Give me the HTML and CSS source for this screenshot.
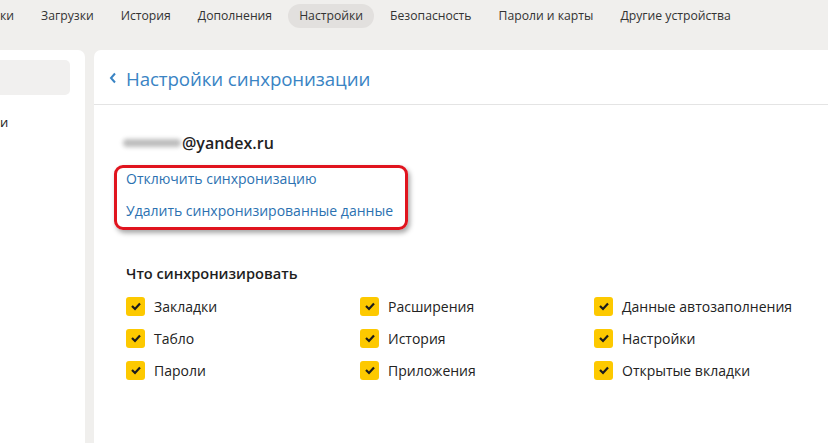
FILE: index.html
```html
<!DOCTYPE html>
<html lang="ru">
<head>
<meta charset="utf-8">
<link rel="stylesheet" href="styles.css">
</head>
<body>
<nav class="topnav">
  <span class="tab tab-cut">ки</span>
  <span class="tab">Загрузки</span>
  <span class="tab">История</span>
  <span class="tab">Дополнения</span>
  <span class="tab active">Настройки</span>
  <span class="tab">Безопасность</span>
  <span class="tab">Пароли и карты</span>
  <span class="tab">Другие устройства</span>
</nav>
<div class="layout">
  <aside class="sidebar">
    <div class="side-selected"></div>
    <div class="side-item">и</div>
  </aside>
  <main class="panel">
    <header class="panel-head">
      <svg class="chev" width="8" height="12" viewBox="0 0 8 12"><path d="M6 1.5 L2 6 L6 10.5" fill="none" stroke="#3a84c4" stroke-width="2"/></svg>
      <h1 class="title">Настройки синхронизации</h1>
    </header>
    <section class="panel-body">
      <div class="account"><span class="blur"></span><span class="domain">@yandex.ru</span></div>
      <div class="links">
        <a class="link">Отключить синхронизацию</a>
        <a class="link">Удалить синхронизированные данные</a>
        <div class="highlight"></div>
      </div>
      <h2 class="subhead">Что синхронизировать</h2>
      <div class="grid">
        <label class="opt"><span class="box"><svg width="12" height="10" viewBox="0 0 12 10"><path d="M2 5 L5 8 L10 2.5" fill="none" stroke="#1c1c1c" stroke-width="2.2"/></svg></span>Закладки</label>
        <label class="opt"><span class="box"><svg width="12" height="10" viewBox="0 0 12 10"><path d="M2 5 L5 8 L10 2.5" fill="none" stroke="#1c1c1c" stroke-width="2.2"/></svg></span>Расширения</label>
        <label class="opt"><span class="box"><svg width="12" height="10" viewBox="0 0 12 10"><path d="M2 5 L5 8 L10 2.5" fill="none" stroke="#1c1c1c" stroke-width="2.2"/></svg></span>Данные автозаполнения</label>
        <label class="opt"><span class="box"><svg width="12" height="10" viewBox="0 0 12 10"><path d="M2 5 L5 8 L10 2.5" fill="none" stroke="#1c1c1c" stroke-width="2.2"/></svg></span>Табло</label>
        <label class="opt"><span class="box"><svg width="12" height="10" viewBox="0 0 12 10"><path d="M2 5 L5 8 L10 2.5" fill="none" stroke="#1c1c1c" stroke-width="2.2"/></svg></span>История</label>
        <label class="opt"><span class="box"><svg width="12" height="10" viewBox="0 0 12 10"><path d="M2 5 L5 8 L10 2.5" fill="none" stroke="#1c1c1c" stroke-width="2.2"/></svg></span>Настройки</label>
        <label class="opt"><span class="box"><svg width="12" height="10" viewBox="0 0 12 10"><path d="M2 5 L5 8 L10 2.5" fill="none" stroke="#1c1c1c" stroke-width="2.2"/></svg></span>Пароли</label>
        <label class="opt"><span class="box"><svg width="12" height="10" viewBox="0 0 12 10"><path d="M2 5 L5 8 L10 2.5" fill="none" stroke="#1c1c1c" stroke-width="2.2"/></svg></span>Приложения</label>
        <label class="opt"><span class="box"><svg width="12" height="10" viewBox="0 0 12 10"><path d="M2 5 L5 8 L10 2.5" fill="none" stroke="#1c1c1c" stroke-width="2.2"/></svg></span>Открытые вкладки</label>
      </div>
    </section>
  </main>
</div>
</body>
</html>
```

FILE: styles.css
```css
* { box-sizing: border-box; }
html, body { margin: 0; padding: 0; height: 100%; }
body {
  background: #f0efed;
  font-family: "Open Sans", "Noto Sans", "Liberation Sans", sans-serif;
  color: #222;
  overflow: hidden;
}
.topnav {
  display: flex;
  align-items: center;
  gap: 5px;
  height: 50px;
  padding: 3px 0 21px 0;
}
.tab {
  font-size: 12.2px;
  color: #333;
  padding: 0 11px;
  height: 24px;
  line-height: 24px;
  border-radius: 12px;
  white-space: nowrap;
}
.tab-cut { padding-left: 0; }
.tab.active { background: #e2e0de; }
.layout {
  display: flex;
  gap: 9px;
  height: calc(100% - 50px);
}
.sidebar {
  width: 85px;
  background: #fff;
  border-top-right-radius: 7px;
  padding-top: 10px;
}
.side-selected {
  width: 70px;
  height: 35px;
  background: #f1f0ef;
  border-radius: 0 5px 5px 0;
}
.side-item {
  font-size: 13px;
  line-height: 18px;
  margin-top: 18px;
  color: #222;
}
.panel {
  flex: 1;
  background: #fff;
  border-top-left-radius: 7px;
}
.panel-head {
  display: flex;
  align-items: center;
  gap: 9px;
  height: 55px;
  padding: 2px 0 0 15px;
  border-bottom: 1px solid #e4e4e4;
}
.chev { display: block; }
.title {
  margin: 0;
  font-size: 18.7px;
  font-weight: 400;
  color: #3a84c4;
  letter-spacing: -0.1px;
}
.panel-body { padding: 27px 0 0 32px; }
.account {
  display: flex;
  align-items: center;
  height: 22px;
  font-size: 16px;
}
.blur {
  width: 58px;
  height: 8px;
  margin-left: -3px;
  margin-right: 1px;
  background: #bdbdbd;
  border-radius: 4px;
  filter: blur(2px);
}
.domain { font-weight: 600; color: #222; }
.links {
  position: relative;
  display: flex;
  flex-direction: column;
  gap: 12px;
  margin-top: 15px;
  width: 270px;
}
.link {
  font-size: 14px;
  line-height: 20px;
  color: #2b71b1;
  white-space: nowrap;
}
.highlight {
  position: absolute;
  left: -12px;
  top: -4px;
  width: 294px;
  height: 65px;
  border: 3px solid #e0141e;
  border-radius: 9px;
  box-shadow: 2px 3px 5px rgba(0,0,0,0.35);
}
.subhead {
  margin: 43px 0 0 0;
  font-size: 14.6px;
  line-height: 18px;
  font-weight: 600;
  color: #1e1e1e;
}
.grid {
  display: grid;
  grid-template-columns: 234px 234px 234px;
  row-gap: 12px;
  margin-top: 14px;
}
.opt {
  display: flex;
  align-items: center;
  gap: 9px;
  height: 20px;
  font-size: 14px;
  color: #222;
  white-space: nowrap;
}
.box {
  width: 19px;
  height: 19px;
  border-radius: 3px;
  background: #fdc900;
  display: flex;
  align-items: center;
  justify-content: center;
}
```
